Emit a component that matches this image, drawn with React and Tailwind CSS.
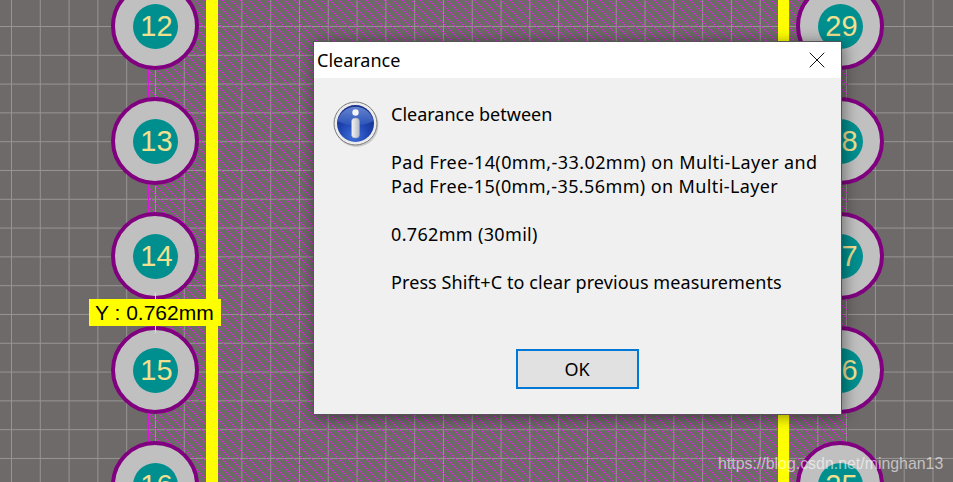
import React from 'react';
import { X } from 'lucide-react';

const leftPads = [[12, 26], [13, 141], [14, 256], [15, 370], [16, 485]];
const rightPads = [[29, 26], [28, 141], [27, 256], [26, 370], [25, 485]];

function Pad({ n, x, y }) {
  return (
    <div
      className="absolute w-[88px] h-[88px] -ml-[44px] -mt-[44px] rounded-full bg-[#c0c0c0] border-[4px] border-[#800080] flex items-center justify-center"
      style={{ left: x, top: y }}
    >
      <div className="w-[45px] h-[45px] rounded-full bg-[#008f8f] flex items-center justify-center pl-[3px] pt-px text-[#f0e090] text-[29px] font-['Liberation_Sans',sans-serif]">
        {n}
      </div>
    </div>
  );
}

function InfoIcon() {
  return (
    <svg width="46" height="46" viewBox="0 0 46 46" className="shrink-0 -mt-px">
      <defs>
        <radialGradient id="ball" cx="45%" cy="85%" r="75%">
          <stop offset="0" stopColor="#3f6fd8" />
          <stop offset="0.55" stopColor="#1f44b0" />
          <stop offset="1" stopColor="#16308c" />
        </radialGradient>
        <linearGradient id="gloss" x1="0" y1="0" x2="0" y2="1">
          <stop offset="0" stopColor="#7fa0e6" />
          <stop offset="1" stopColor="#2f56bc" />
        </linearGradient>
        <linearGradient id="stem" x1="0" y1="0" x2="1" y2="0">
          <stop offset="0" stopColor="#f6f6f6" />
          <stop offset="1" stopColor="#b4b8c4" />
        </linearGradient>
      </defs>
      <circle cx="23.5" cy="24" r="22" fill="#00000026" />
      <circle cx="22.5" cy="22.5" r="21.5" fill="#ececec" stroke="#7c7c7c" strokeWidth="1" />
      <circle cx="22.5" cy="22.5" r="18.5" fill="url(#ball)" />
      <path d="M4.5 20 A18.5 18.5 0 0 1 40.5 20 Q22.5 29 4.5 20Z" fill="url(#gloss)" opacity="0.75" />
      <circle cx="22.5" cy="11.5" r="3.2" fill="#f4f4f4" />
      <rect x="18.5" y="17" width="8" height="20" rx="3.5" fill="url(#stem)" stroke="#8f9ab8" strokeWidth="0.5" />
    </svg>
  );
}

export default function App() {
  return (
    <div className="relative w-[953px] h-[482px] overflow-hidden bg-[#6e6a69] bg-[linear-gradient(to_right,#979493_1px,transparent_1px),linear-gradient(to_bottom,#979493_1px,transparent_1px)] bg-[size:28.8px_28.8px] bg-[position:11px_26px]">
      {/* copper pour hatch */}
      <div className="absolute left-[148px] top-0 w-[700px] h-full border-x border-[#d818d8] bg-[linear-gradient(45deg,#e81ae8_6%,transparent_6%,transparent_50%,#e81ae8_50%,#e81ae8_56%,transparent_56%)] bg-[size:9px_9px]" />

      {/* tracks */}
      <div className="absolute left-[206px] top-0 w-[12px] h-full bg-[#ffff00]" />
      <div className="absolute left-[778px] top-0 w-[11px] h-full bg-[#ffff00]" />

      {leftPads.map(([n, y]) => <Pad key={n} n={n} x={155} y={y} />)}
      {rightPads.map(([n, y]) => <Pad key={n} n={n} x={840} y={y} />)}

      {/* measure line + label */}
      <div className="absolute left-[155px] top-[293px] w-px h-[40px] bg-[#f0e090]" />
      <div className="absolute left-[89px] top-[299px] w-[132px] h-[27px] bg-[#ffff00] text-black text-[21px] leading-[27px] pl-[6px] whitespace-nowrap font-['Liberation_Sans',sans-serif]">
        Y : 0.762mm
      </div>

      {/* dialog */}
      <div className="absolute left-[313px] top-[41px] w-[529px] h-[374px] flex flex-col bg-[#f0f0f0] border border-[#555] shadow-[2px_2px_14px_rgba(0,0,0,0.45)] text-black text-[18px] font-['Noto_Sans',sans-serif]">
        <div className="h-[36px] bg-white flex items-center justify-between pl-[3px] pr-[10px]">
          <span>Clearance</span>
          <X size={28} strokeWidth={0.8} />
        </div>
        <div className="flex-1 flex flex-col">
          <div className="flex gap-[12px] pl-[19px] pt-[24px]">
            <InfoIcon />
            <div className="leading-[24px] whitespace-nowrap">
              <p>Clearance between</p>
              <p className="mt-[24px] tracking-[0.41px]">Pad Free-14(0mm,-33.02mm) on Multi-Layer and</p>
              <p className="tracking-[0.39px]">Pad Free-15(0mm,-35.56mm) on Multi-Layer</p>
              <p className="mt-[24px] tracking-[0.33px]">0.762mm (30mil)</p>
              <p className="mt-[24px] tracking-[0.09px]">Press Shift+C to clear previous measurements</p>
            </div>
          </div>
          <div className="mt-auto mb-[25px] flex justify-center pr-[1px]">
            <button className="w-[123px] h-[40px] bg-[#e1e1e1] border-2 border-[#0078d7]">OK</button>
          </div>
        </div>
      </div>

      <div className="absolute left-[718px] top-[452px] whitespace-nowrap text-white/60 text-[15.9px] font-['Liberation_Sans',sans-serif]">
        https://blog.csdn.net/minghan13
      </div>
    </div>
  );
}
